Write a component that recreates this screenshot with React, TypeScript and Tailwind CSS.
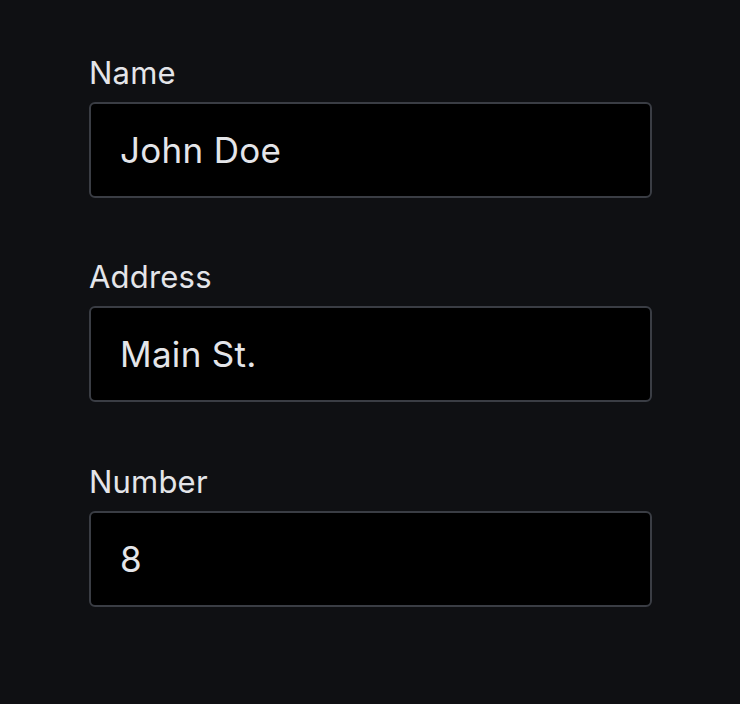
import React from 'react';

const fields = [
  { label: 'Name', value: 'John Doe' },
  { label: 'Address', value: 'Main St.' },
  { label: 'Number', value: '8' },
];

export default function App() {
  return (
    <div
      className="min-h-[704px] w-[740px] bg-[#0f1013] pl-[89px] pt-[52.5px]"
      style={{ fontFamily: 'Inter, "Noto Sans", sans-serif' }}
    >
      <div className="flex w-[563px] flex-col gap-[59.5px]">
        {fields.map((f) => (
          <div key={f.label} className="flex flex-col">
            <label className="mb-[9px] h-[40px] text-[31px] leading-[40px] tracking-[0.2px] text-[#e4e5e9]">{f.label}</label>
            <input
              defaultValue={f.value}
              className="h-[96px] w-full rounded-[6px] border-2 border-[#3a3d44] bg-black pl-[29px] text-[35px] tracking-[0.3px] text-[#e4e5e9] outline-none"
            />
          </div>
        ))}
      </div>
    </div>
  );
}
